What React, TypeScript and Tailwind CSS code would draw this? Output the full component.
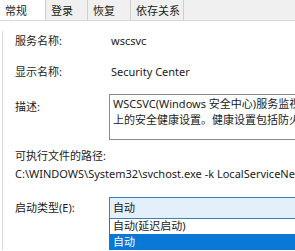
export default function App() {
  const tabs = [
    { label: "常规", w: "w-[46px] bg-white" },
    { label: "登录", w: "w-[42px]" },
    { label: "恢复", w: "w-[43px]" },
    { label: "依存关系", w: "w-[53px]" },
  ];

  return (
    <div className="w-[295px] h-[251px] overflow-hidden bg-white text-[11px] text-[#1b1b1b] font-['Noto_Sans','Noto_Sans_CJK_SC',sans-serif]">
      {/* TABS */}
      <div className="flex h-[21px] bg-[#f0f0f0] border-b border-[#d9d9d9]">
        {tabs.map((t) => (
          <div
            key={t.label}
            className={"flex items-center whitespace-nowrap border-r border-[#cfcfcf] pl-[5px] leading-none " + t.w}
          >
            {t.label}
          </div>
        ))}
      </div>

      {/* CONTENT */}
      <div className="border-l border-[#dcdcdc] ml-[2px] pl-[12px]">
        <div className="flex items-center h-[20px] mt-[10px]">
          <span className="w-[96px]">服务名称:</span>
          <span>wscsvc</span>
        </div>

        <div className="flex items-center h-[20px] mt-[11px]">
          <span className="w-[96px]">显示名称:</span>
          <span>Security Center</span>
        </div>

        <div className="flex mt-[12px]">
          <span className="w-[94px] pt-[5px]">描述:</span>
          <div className="flex-1 h-[46px] border border-[#8a8a8a] border-r-0 pl-[3px] pt-[1px] leading-[16px] whitespace-nowrap overflow-hidden">
            <div>WSCSVC(Windows 安全中心)服务监视并报告计算机</div>
            <div>上的安全健康设置。健康设置包括防火墙</div>
          </div>
        </div>

        <div className="mt-[8px] h-[17px] flex items-center">可执行文件的路径:</div>
        <div className="h-[18px] flex items-center whitespace-nowrap">
          C:\WINDOWS\System32\svchost.exe -k LocalServiceNetworkRestricted
        </div>

        <div className="flex mt-[14px]">
          <span className="w-[94px] pt-[3px]">启动类型(E):</span>
          <div className="flex-1">
            <div className="h-[22px] border border-[#3c7fb1] border-r-0 bg-[#e3effa] pl-[3px] flex items-center">
              自动
            </div>
            <div className="border-l border-[#646464]">
              <div className="h-[15px] pl-[3px] flex items-center bg-white">
                自动(延迟启动)
              </div>
              <div className="h-[16px] pl-[3px] flex items-center bg-[#0a78d7] text-white">
                自动
              </div>
            </div>
          </div>
        </div>
      </div>
    </div>
  );
}
